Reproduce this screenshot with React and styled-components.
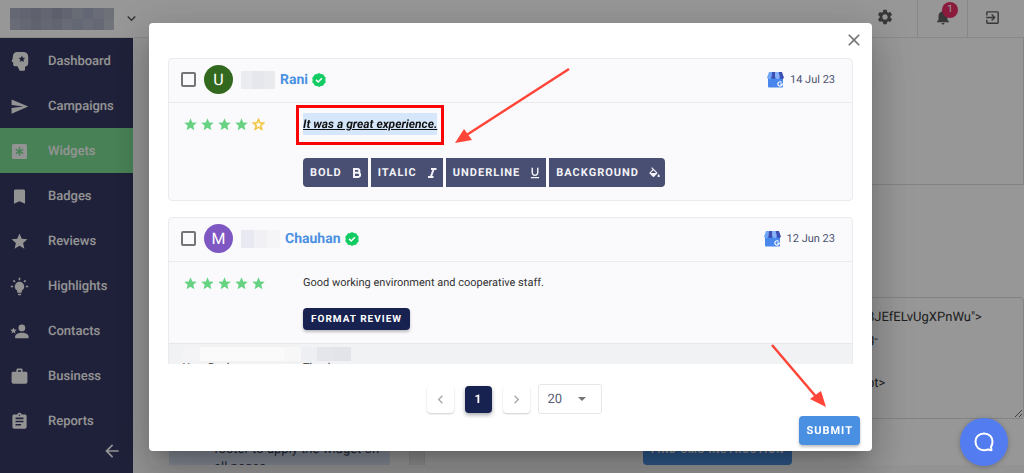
import React from "react";
import styled, { createGlobalStyle, css } from "styled-components";
import {
  MdSend, MdBookmark, MdStar, MdStarOutline, MdWork, MdAssignment, MdArrowBack, MdSettings,
  MdNotifications, MdExitToApp, MdFormatUnderlined,
  MdClose, MdChevronLeft, MdChevronRight, MdExpandMore,
} from "react-icons/md";

const Global = createGlobalStyle`
  *, *::before, *::after { box-sizing: border-box; }
  body {
    margin: 0;
    background: #fcfcfc;
    font-family: Roboto, "Liberation Sans", sans-serif;
    text-rendering: geometricPrecision;
    overflow: hidden;
  }
  button, input, textarea, select { font-family: inherit; margin: 0; text-rendering: inherit; }
  p { margin: 0; }
`;

/* Shell */
const Shell = styled.div`
  display: flex;
  flex-direction: column;
  height: 100vh;
  background: #f6f6f7;
`;
const TopBar = styled.header`
  display: flex;
  align-items: stretch;
  justify-content: space-between;
  flex: none;
  height: 38px;
  border-bottom: 1px solid #e4e4e4;
  background: #fcfcfc;
`;
const Account = styled.button`
  display: flex;
  align-items: center;
  gap: 9px;
  padding: 0 0 0 10px;
  border: 0;
  background: none;
  color: #555;
`;
const Tools = styled.div`
  display: flex;
`;
const Tool = styled.button`
  position: relative;
  display: flex;
  align-items: center;
  justify-content: center;
  width: ${(p) => (p.$wide ? "57px" : "50px")};
  padding: 0 ${(p) => (p.$wide ? "7px" : "0")} 3px 0;
  border: 0;
  border-left: ${(p) => (p.$line ? "1px solid #e2e2e2" : "0")};
  background: none;
  color: #5e5e5e;
`;
const Count = styled.span`
  position: absolute;
  top: 2px;
  left: 24px;
  width: 16px;
  height: 16px;
  border-radius: 8px;
  background: #e62e66;
  color: #fff;
  font-size: 10px;
  line-height: 16px;
  text-align: center;
`;
const Mosaic = styled.span`
  display: grid;
  grid-template-columns: repeat(${(p) => p.$cols}, 1fr);
  flex: none;
  width: ${(p) => p.$w}px;
  height: ${(p) => p.$h}px;
`;
const Tile = styled.span`
  background: ${(p) => p.$c};
`;

const Body = styled.div`
  display: flex;
  flex: 1;
  min-height: 0;
`;
const Side = styled.nav`
  display: flex;
  flex-direction: column;
  flex: none;
  width: 133px;
  background: #343761;
`;
const NavLink = styled.a`
  display: flex;
  align-items: center;
  gap: 19px;
  flex: none;
  height: 45px;
  padding: 1px 0 0 10px;
  background: ${(p) => (p.$on ? "#7ad890" : "transparent")};
  color: #f6f6f6;
  font-size: 13px;
  font-weight: 500;
  text-decoration: none;
`;
const Collapse = styled.button`
  align-self: flex-end;
  display: flex;
  margin: -2px 11px 0 0;
  padding: 0;
  border: 0;
  background: none;
  color: #f6f6f6;
  line-height: 0;
`;

const Main = styled.main`
  display: grid;
  grid-template-columns: 221px 16px 1fr;
  align-items: end;
  flex: 1;
  margin: 0 0 8px 16px;
  padding: 0 26px 0 20px;
  overflow: hidden;
  background: #fcfcfc;
  column-gap: 19px;
`;
const Tip = styled.p`
  height: 60px;
  padding: 36px 0 0 45px;
  overflow: hidden;
  background: #dce6f7;
  color: #353d5c;
  font-size: 13px;
  line-height: 18px;
`;
const Divider = styled.div`
  height: 80px;
  border: 1px solid #e2e2e2;
  border-bottom: 0;
  background: #ececee;
`;
const Embed = styled.div`
  display: flex;
  flex-direction: column;
  align-items: flex-start;
  height: 100%;
  margin-left: 199px;
`;
const Preview = styled.div`
  align-self: stretch;
  flex: 1;
  border: 1px solid #dadada;
  border-top: 0;
`;
const Code = styled.textarea`
  align-self: stretch;
  flex: none;
  height: 122px;
  margin: 112px 0 17px;
  padding: 9px 8px 8px 223px;
  border: 1px solid #dadada;
  border-radius: 4px;
  background: transparent;
  color: #333;
  font-size: 13px;
  line-height: 22px;
  white-space: pre;
  overflow: hidden;
`;

/* Buttons */
const Button = styled.button`
  display: inline-flex;
  align-items: center;
  justify-content: center;
  gap: 8px;
  flex: none;
  height: 29px;
  padding: 0 7px;
  border: 0;
  border-radius: 4px;
  background: #4a90e2;
  color: #fff;
  font-size: 11px;
  font-weight: 700;
  letter-spacing: 1px;
  white-space: nowrap;
  ${(p) => p.$wide && css`padding: 0 8px; font-size: 10px;`}
  ${(p) => p.$raised && css`box-shadow: 0 2px 3px rgba(0, 0, 0, 0.25);`}
  ${(p) => p.$dark && css`
    height: 22px;
    padding: 0 8px;
    background: #182251;
    font-size: 10px;
  `}
`;
const Format = styled(Button)`
  padding: 0 4px 0 7px;
  border-radius: 0;
  background: #494f73;
  color: #f4f4f8;
  &:first-child { border-radius: 4px 0 0 4px; }
  &:last-child { border-radius: 0 4px 4px 0; }
`;
const Formats = styled.div`
  display: flex;
  gap: 3px;
`;

/* Dialog */
const Backdrop = styled.div`
  position: fixed;
  inset: 0;
  display: flex;
  padding: 23px 152px 22px 149px;
  background: rgba(0, 0, 0, 0.4);
`;
const Dialog = styled.section`
  position: relative;
  display: flex;
  flex-direction: column;
  flex: 1;
  min-width: 0;
  padding: 7px 12px 6px 19px;
  border-radius: 4px;
  background: #fff;
  box-shadow: 0 11px 15px -7px rgba(0, 0, 0, 0.2), 0 24px 38px 3px rgba(0, 0, 0, 0.14), 0 9px 46px 8px rgba(0, 0, 0, 0.12);
`;
const Close = styled.button`
  align-self: flex-end;
  display: flex;
  padding: 0;
  margin-right: -4px;
  border: 0;
  background: none;
  color: #757575;
`;
const List = styled.div`
  display: flex;
  flex-direction: column;
  gap: 16px;
  flex: 1;
  min-height: 0;
  margin: 8px 7px 0 0;
  overflow: hidden;
`;
const Card = styled.article`
  flex: none;
  border: 1px solid #ebebed;
  border-radius: 4px;
  background: #fafafc;
`;
const CardHead = styled.header`
  display: flex;
  align-items: center;
  height: 44px;
  padding: 0 17px 2px 12px;
  border-bottom: 1px solid #ebebed;
`;
const Check = styled.input`
  appearance: none;
  width: 15px;
  height: 15px;
  border: 2px solid #757575;
  border-radius: 2px;
`;
const Avatar = styled.span`
  width: 29px;
  height: 29px;
  margin: 0 8px;
  border-radius: 50%;
  background: ${(p) => p.$c};
  color: #fff;
  font-size: 16px;
  line-height: 29px;
  text-align: center;
`;
const Name = styled.a`
  margin: 0 4px 0 5px;
  color: #4a90e2;
  font-size: 14px;
  font-weight: 700;
  text-decoration: none;
`;
const When = styled.span`
  display: flex;
  align-items: center;
  gap: 6px;
  margin-left: auto;
  color: #4b5270;
  font-size: 11px;
`;
const CardBody = styled.div`
  display: grid;
  grid-template-columns: 120px 1fr;
  padding: 10px 14px 13px;
`;
const Stars = styled.div`
  display: flex;
  gap: 2px;
  height: 22px;
  align-items: center;
`;
const Copy = styled.div`
  display: flex;
  flex-direction: column;
  align-items: flex-start;
  gap: ${(p) => (p.$open ? "23px" : "14px")};
`;
const Quote = styled.p`
  position: relative;
  color: #333;
  font-size: 11px;
  line-height: 22px;
  ${(p) => p.$mark && css`
    background: #d6e7fb;
    color: #111;
    font-size: 12px;
    font-weight: 700;
    font-style: italic;
    text-decoration: underline;
    &::after {
      content: "";
      position: absolute;
      inset: -8px -7px -10px -7px;
      border: 3px solid #f90505;
    }
  `}
`;
const Reply = styled.footer`
  display: grid;
  grid-template-columns: 120px 1fr;
  padding: 3px 14px 13px;
  border-top: 1px solid #e6e7ea;
  background: #f1f2f4;
  color: #333;
  font-size: 11px;
  line-height: 12px;
`;
const Cover = styled.div`
  grid-column: 1 / -1;
  height: 15px;
`;

const Pager = styled.div`
  display: flex;
  align-items: center;
  justify-content: center;
  gap: 8px;
  margin-top: 20px;
`;
const Step = styled.button`
  display: flex;
  align-items: center;
  justify-content: center;
  width: 27px;
  height: 27px;
  padding: 0;
  border: 0;
  border-radius: 4px;
  background: ${(p) => (p.$on ? "#182251" : "#fff")};
  color: ${(p) => (p.$on ? "#fff" : "#aaa")};
  font-size: 12px;
  font-weight: 700;
  box-shadow: ${(p) => (p.$on ? "0 2px 4px rgba(0,0,0,.35)" : "0 1px 2px rgba(0,0,0,.2)")};
  margin: ${(p) => (p.$on ? "0 3px" : "0")};
`;
const SizeBox = styled.div`
  display: flex;
  position: relative;
  svg {
    position: absolute;
    right: 16px;
    top: 13px;
    pointer-events: none;
  }
`;
const Size = styled.select`
  appearance: none;
  width: 64px;
  height: 30px;
  padding: 0 9px;
  border: 1px solid #e6e6e8;
  border-radius: 3px;
  background: #fff;
  color: #575d78;
  font-size: 13px;
`;
const Actions = styled.div`
  display: flex;
  justify-content: flex-end;
  margin-top: 2px;
`;
const Pointer = styled.svg`
  position: absolute;
  left: ${(p) => p.$x}px;
  top: ${(p) => p.$y}px;
  pointer-events: none;
`;
const CornerPointer = styled.svg`
  position: absolute;
  right: 44px;
  bottom: 42px;
  pointer-events: none;
`;
const Chat = styled.button`
  position: fixed;
  right: 16px;
  bottom: 7px;
  display: flex;
  align-items: center;
  justify-content: center;
  width: 48px;
  height: 48px;
  padding: 0;
  border: 0;
  border-radius: 50%;
  background: #527cf0;
  box-shadow: 0 1px 5px rgba(0, 0, 0, 0.25);
`;

/* Drawn icons */
const STAR = "M12 1l3.2 7.2 7.8.7-5.900 5.200 1.800 7.700L12 17.700 5.100 21.800l1.800-7.700L1 8.900l7.800-.7z";
const Svg = ({ size = 19, children }) => (
  <svg width={size} height={size} viewBox="0 0 24 24" fill="currentColor" aria-hidden="true">{children}</svg>
);
const HeadIcon = () => (
  <Svg>
    <path fillRule="evenodd" d="M9 0h7.500C20.500 0 23 2 23 6v8c0 2.700-1.500 4-4 4.500V22c0 1.200-.6 1.800-1.800 1.800h-4c-.8 0-1.200-.5-1.500-1.200L9.500 18H6.500C5 18 4 17.200 4 15.700V13l-1.300-.5C2 12 2 11.500 2.300 11L3.500 8C3.500 3 5 0 9 0zM15 4.500l-1.200 2.900-3.100.2 2.400 2-.8 3L15 11l2.700 1.600-.8-3 2.400-2-3.100-.2z" />
  </Svg>
);
const WidgetIcon = () => (
  <Svg>
    <path fillRule="evenodd" d="M4.500 2.500h15a2 2 0 0 1 2 2v15a2 2 0 0 1-2 2h-15a2 2 0 0 1-2-2v-15a2 2 0 0 1 2-2zM11 6.500v3.800L7.800 8.400l-1 1.700L10 12l-3.200 1.900 1 1.700 3.200-1.900v3.800h2v-3.800l3.200 1.900 1-1.700L14 12l3.200-1.900-1-1.700L13 10.300V6.500z" />
  </Svg>
);
const BulbIcon = () => (
  <Svg>
    <path d="M12,6A6,6 0 0,1 18,12C18,14.22 16.79,16.16 15,17.2V19A1,1 0 0,1 14,20H10A1,1 0 0,1 9,19V17.2C7.21,16.16 6,14.22 6,12A6,6 0 0,1 12,6M14,21V22A1,1 0 0,1 13,23H11A1,1 0 0,1 10,22V21H14M20,11H23V13H20V11M1,11H4V13H1V11M13,1V4H11V1H13M4.92,3.5L7.05,5.64L5.63,7.05L3.5,4.93L4.92,3.5M16.95,5.63L19.07,3.5L20.5,4.93L18.37,7.05L16.95,5.63Z" />
  </Svg>
);
const ContactIcon = () => (
  <Svg>
    <circle cx="15" cy="7.500" r="4.300" />
    <path d="M6.500 20.500v-2c0-3 4.500-4.800 8.500-4.800s8.500 1.800 8.500 4.800v2z" />
    <g transform="translate(0 6.500) scale(.37)"><path d={STAR} /></g>
  </Svg>
);
const BoldIcon = () => (
  <svg width="14" height="14" viewBox="0 0 14 14" fill="none" stroke="currentColor" strokeWidth="2" aria-hidden="true">
    <path d="M4 3h3.500a1.900 1.900 0 0 1 0 3.800H4M4 6.800h4a2.100 2.100 0 0 1 0 4.200H4M4 2v10" />
  </svg>
);
const ItalicIcon = () => (
  <svg width="14" height="14" viewBox="0 0 14 14" fill="none" stroke="currentColor" strokeWidth="2" aria-hidden="true">
    <path d="M6 3h5.500M3 11h5.500M8.700 3L5.800 11" />
  </svg>
);
const FillIcon = () => (
  <Svg size={14}>
    <path transform="translate(1 2)" d="M19,11.5C19,11.5 17,13.67 17,15A2,2 0 0,0 19,17A2,2 0 0,0 21,15C21,13.67 19,11.5 19,11.5M5.21,10L10,5.21L14.79,10M16.56,8.94L7.62,0L6.21,1.41L8.59,3.79L3.44,8.94C2.85,9.5 2.85,10.47 3.44,11.06L8.94,16.56C9.23,16.85 9.62,17 10,17C10.38,17 10.77,16.85 11.06,16.56L16.56,11.06C17.15,10.47 17.15,9.5 16.56,8.94Z" />
  </Svg>
);
const VerifiedIcon = () => (
  <svg width="14" height="14" viewBox="0 0 24 24" aria-hidden="true">
    <path fill="#12cc63" stroke="#12cc63" strokeWidth="2" strokeLinejoin="round" d="M12 1.200l3 1.500 3.400.3 1.700 2.900 2.400 2.400-.6 3.700.6 3.700-2.400 2.400-1.700 2.900-3.400.3-3 1.500-3-1.500-3.400-.3-1.700-2.900-2.400-2.400.6-3.700-.6-3.700 2.400-2.400L5.600 3 9 2.700z" />
    <path fill="none" stroke="#fff" strokeWidth="2.600" d="M7 11.800l3.600 3.600L17 9" />
  </svg>
);
const Shop = () => (
  <svg width="17" height="17" viewBox="0 0 17 17" aria-hidden="true">
    <path fill="#4a87ec" d="M1 6h15v9.500a1 1 0 0 1-1 1H2a1 1 0 0 1-1-1z" />
    <path fill="#6fa4f6" d="M2 1h3.300L4.400 6.500a2.200 2.200 0 0 1-4.300 0z" />
    <path fill="#3c4fb5" d="M5.100 1h3.400v5.500a2.200 2.200 0 0 1-4.200 0z" />
    <path fill="#86b2fa" d="M8.500 1h3.400l.8 5.500a2.200 2.200 0 0 1-4.200 0z" />
    <path fill="#3c4fb5" d="M11.700 1H15l1.900 5.500a2.200 2.200 0 0 1-4.200 0z" />
    <path fill="none" stroke="#fff" strokeWidth="1.200" d="M14.600 11.400a2.200 2.200 0 1 0 .6 1.800h-2" />
  </svg>
);

const NAV = [
  ["Dashboard", HeadIcon], ["Campaigns", MdSend], ["Widgets", WidgetIcon], ["Badges", MdBookmark],
  ["Reviews", MdStar], ["Highlights", BulbIcon], ["Contacts", ContactIcon], ["Business", MdWork], ["Reports", MdAssignment],
];
const LOGO_TILES = [
  "#a9aec2", "#a4a9bd", "#9ea3b7", "#a5abbd", "#9b9fb4", "#a3a8bd", "#aeb4c3", "#a6abc2", "#b1b6c6", "#b9bdc9",
  "#b0b4c7", "#a9adbe", "#a1a6b6", "#a8acc0", "#a4a8ba", "#adb3c4", "#a7adc2", "#afb4c7", "#aaaec3", "#bcc0cb",
];
const REPLY_TILES = ["#f4f4f6", "#fafafb", "#fafafb", "#fafafb", "#fafafb", "#fafafb", "#f7f7f8", "#eeeff2", "#e5e6eb", "#e3e4e9"];

const Pixels = ({ tiles, cols, w, h }) => (
  <Mosaic $cols={cols} $w={w} $h={h} aria-hidden="true">
    {tiles.map((c, i) => <Tile key={i} $c={c} />)}
  </Mosaic>
);

const Rating = ({ value }) => (
  <Stars role="img" aria-label={`${value} of 5 stars`}>
    {[1, 2, 3, 4, 5].map((n) =>
      n <= value
        ? <MdStar key={n} size={15} color="#68d283" />
        : <MdStarOutline key={n} size={15} color="#f0c43c" stroke="#f0c43c" strokeWidth={1} />
    )}
  </Stars>
);

const Head = ({ initial, color, tiles, w, name, date }) => (
  <CardHead>
    <Check type="checkbox" aria-label={`Select review by ${name}`} />
    <Avatar $c={color}>{initial}</Avatar>
    <Pixels tiles={tiles} cols={tiles.length} w={w} h={18} />
    <Name href="#">{name}</Name>
    <VerifiedIcon />
    <When><Shop />{date}</When>
  </CardHead>
);

export default function App() {
  return (
    <>
      <Global />
      <Shell>
        <TopBar>
          <Account aria-label="Switch account">
            <Pixels tiles={LOGO_TILES} cols={10} w={104} h={22} />
            <MdExpandMore size={17} />
          </Account>
          <Tools>
            <Tool $wide aria-label="Settings"><MdSettings size={18} /></Tool>
            <Tool $line aria-label="Notifications"><MdNotifications size={18} /><Count>1</Count></Tool>
            <Tool $line $wide aria-label="Sign out"><MdExitToApp size={17} /></Tool>
          </Tools>
        </TopBar>
        <Body>
          <Side>
            {NAV.map(([label, Icon]) => (
              <NavLink key={label} href="#" $on={label === "Widgets"}><Icon size={19} />{label}</NavLink>
            ))}
            <Collapse aria-label="Collapse menu"><MdArrowBack size={20} /></Collapse>
          </Side>
          <Main>
            <Tip>footer to apply the widget on all pages</Tip>
            <Divider />
            <Embed>
              <Preview />
              <Code aria-label="Embed code" defaultValue={'8JEfELvUgXPnWu">\ng-\n\npt>'} />
              <Button $wide>FIND CMS INSTRUCTION</Button>
            </Embed>
          </Main>
        </Body>
      </Shell>

      <Backdrop>
        <Dialog role="dialog" aria-label="Format reviews">
          <Close aria-label="Close"><MdClose size={20} /></Close>
          <List>
            <Card>
              <Head initial="U" color="#33691e" tiles={["#ebecef", "#e6e7ec", "#e9eaee"]} w={34} name="Rani" date="14 Jul 23" />
              <CardBody>
                <Rating value={4} />
                <Copy $open>
                  <Quote $mark>It was a great experience.</Quote>
                  <Formats>
                    <Format>BOLD <BoldIcon /></Format>
                    <Format>ITALIC <ItalicIcon /></Format>
                    <Format>UNDERLINE <MdFormatUnderlined size={14} /></Format>
                    <Format>BACKGROUND <FillIcon /></Format>
                  </Formats>
                </Copy>
              </CardBody>
            </Card>
            <Card>
              <Head initial="M" color="#7e57c2" tiles={["#e9e9f2", "#f0f0f5", "#f5f5f8"]} w={39} name="Chauhan" date="12 Jun 23" />
              <CardBody>
                <Rating value={5} />
                <Copy>
                  <Quote>Good working environment and cooperative staff.</Quote>
                  <Button $dark $raised>FORMAT REVIEW</Button>
                </Copy>
              </CardBody>
              <Reply>
                <Cover><Pixels tiles={REPLY_TILES} cols={10} w={168} h={14} /></Cover>
                <span>Your Reply</span>
                <span>Thanks</span>
              </Reply>
            </Card>
          </List>
          <Pager>
            <Step aria-label="Previous page"><MdChevronLeft size={17} /></Step>
            <Step $on>1</Step>
            <Step aria-label="Next page"><MdChevronRight size={17} /></Step>
            <SizeBox>
              <Size aria-label="Reviews per page" defaultValue="20"><option>20</option></Size>
              <svg width="8" height="4" viewBox="0 0 8 4" aria-hidden="true"><path d="M0 0h8L4 4z" fill="#757575" /></svg>
            </SizeBox>
          </Pager>
          <Actions><Button $raised>SUBMIT</Button></Actions>
          <Pointer $x={304} $y={44} width="120" height="80" viewBox="0 0 120 80" aria-hidden="true">
            <path d="M116 2L12 69" stroke="#ff4438" strokeWidth="2.500" fill="none" />
            <path d="M2 76l9-14 8 11z" fill="#ff4438" />
          </Pointer>
          <CornerPointer width="60" height="68" viewBox="0 0 60 68" aria-hidden="true">
            <path d="M4 4l46 54" stroke="#ff4438" strokeWidth="2.500" fill="none" />
            <path d="M58 66l-16-8 11-8z" fill="#ff4438" />
          </CornerPointer>
        </Dialog>
      </Backdrop>
      <Chat aria-label="Open chat">
        <svg width="22" height="22" viewBox="0 0 22 22" fill="none" stroke="#fff" strokeWidth="2" strokeLinejoin="round" aria-hidden="true">
          <path d="M11 2.500c5 0 8.500 3.400 8.500 8.300 0 2-.5 3.600-1.500 5l.5 3.400-3.400-.7c-1.300.5-2.600.7-4.100.7-5 0-8.500-3.500-8.500-8.400S6 2.500 11 2.500z" />
        </svg>
      </Chat>
    </>
  );
}
